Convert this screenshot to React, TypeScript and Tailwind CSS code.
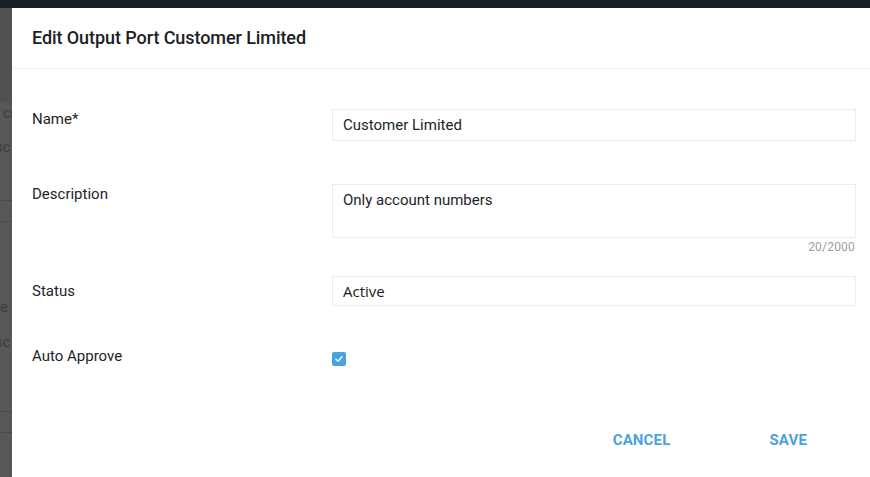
import React from "react";

export default function App() {
  return (
    <div className="w-[870px] h-[477px] overflow-hidden flex flex-col bg-[#575757]" style={{ fontFamily: "Roboto, 'Liberation Sans', sans-serif" }}>
      <div className="h-[8px] bg-[#19202a] shrink-0" />
      <div className="flex flex-1 min-h-0">
        {/* backdrop strip */}
        <div className="w-[12px] shrink-0 overflow-hidden bg-[#575757] text-[#3c3c3c] text-[14px] leading-[20px] flex flex-col">
          <div className="h-[95px] bg-[#515151] shrink-0" />
          <div className="ml-[3px] whitespace-nowrap">cu</div>
          <div className="mt-[14px] ml-[-12px] whitespace-nowrap">esc</div>
          <div className="mt-[43px] h-px bg-[#4a4a4a] shrink-0" />
          <div className="mt-[20px] h-px bg-[#4a4a4a] shrink-0" />
          <div className="mt-[75px] ml-[-10px] whitespace-nowrap">ize</div>
          <div className="mt-[15px] ml-[-12px] whitespace-nowrap">esc</div>
          <div className="mt-[59px] h-px bg-[#4a4a4a] shrink-0" />
          <div className="mt-[20px] h-px bg-[#4a4a4a] shrink-0" />
        </div>
        {/* dialog */}
        <div className="flex-1 bg-white flex flex-col">
          <div className="h-[61px] border-b border-[#eeeeee] flex items-center pl-[20px] shrink-0">
            <h2 className="text-[18px] font-medium text-[#1d2026] tracking-[-0.08px] mt-[-2px]">Edit Output Port Customer Limited</h2>
          </div>
          <div className="pl-[20px] pr-[14px] flex flex-col text-[15px] text-[#222428]">
            <div className="flex items-start mt-[40px]">
              <div className="w-[300px] leading-[20px]">Name*</div>
              <div className="flex-1 h-[32px] border border-[#ececec] flex items-center pl-[10px]">Customer Limited</div>
            </div>
            <div className="flex items-start mt-[43px]">
              <div className="w-[300px] leading-[20px]">Description</div>
              <div className="flex-1 flex flex-col">
                <div className="h-[54px] border border-[#ececec] pl-[10px] pt-[5px] leading-[20px]">Only account numbers</div>
                <div className="text-right text-[12px] leading-[16px] text-[#9e9e9e] mt-[1px] pr-[1px] tracking-[0.2px]">20/2000</div>
              </div>
            </div>
            <div className="flex items-start mt-[21px]">
              <div className="w-[300px] leading-[20px] mt-[5px]">Status</div>
              <div className="flex-1 h-[30px] border border-[#ececec] flex items-center pl-[10px] text-[15px] text-[#1a1a1a]" style={{ fontFamily: "'Open Sans', 'Noto Sans', sans-serif" }}>Active</div>
            </div>
            <div className="flex items-start mt-[40px]">
              <div className="w-[300px] leading-[20px]">Auto Approve</div>
              <div className="mt-[6px] w-[14px] h-[14px] rounded-[2px] bg-[#46a3dc] flex items-center justify-center">
                <svg width="10" height="10" viewBox="0 0 10 10" fill="none">
                  <path d="M2 5.2 L4.1 7.2 L8 2.8" stroke="white" strokeWidth="1.4" strokeLinecap="round" strokeLinejoin="round" />
                </svg>
              </div>
            </div>
            <div className="flex justify-end mt-[64px] pr-[49px] text-[15px] font-bold text-[#4aa3dc] tracking-[0.15px]">
              <button className="leading-[20px] uppercase">CANCEL</button>
              <button className="ml-[99px] leading-[20px] uppercase">SAVE</button>
            </div>
          </div>
        </div>
      </div>
    </div>
  );
}
